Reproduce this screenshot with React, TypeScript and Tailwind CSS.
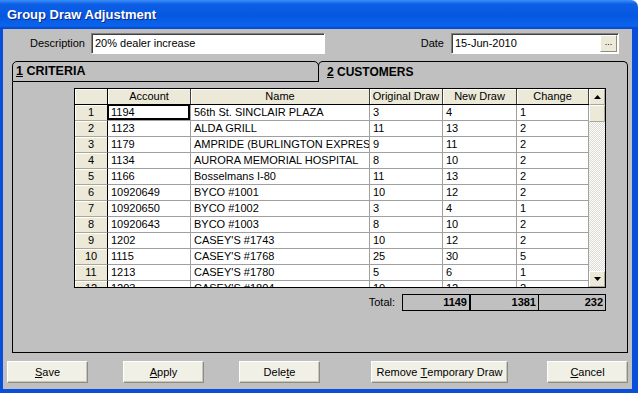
import React from 'react';

const rows: string[][] = [
  ['1', '1194', '56th St. SINCLAIR PLAZA', '3', '4', '1'],
  ['2', '1123', 'ALDA GRILL', '11', '13', '2'],
  ['3', '1179', 'AMPRIDE (BURLINGTON EXPRESS)', '9', '11', '2'],
  ['4', '1134', 'AURORA MEMORIAL HOSPITAL', '8', '10', '2'],
  ['5', '1166', 'Bosselmans I-80', '11', '13', '2'],
  ['6', '10920649', 'BYCO #1001', '10', '12', '2'],
  ['7', '10920650', 'BYCO #1002', '3', '4', '1'],
  ['8', '10920643', 'BYCO #1003', '8', '10', '2'],
  ['9', '1202', "CASEY'S #1743", '10', '12', '2'],
  ['10', '1115', "CASEY'S #1768", '25', '30', '5'],
  ['11', '1213', "CASEY'S #1780", '5', '6', '1'],
  ['12', '1203', "CASEY'S #1804", '10', '12', '2'],
];

const headers = ['Account', 'Name', 'Original Draw', 'New Draw', 'Change'];
const colWidths = ['w-[83px]', 'w-[179px]', 'w-[73px]', 'w-[74px]', 'w-[72px]'];

function Arrow({ down }: { down?: boolean }) {
  return (
    <svg width="7" height="4" viewBox="0 0 7 4">
      <path d={down ? 'M0 0 L7 0 L3.5 4 Z' : 'M3.5 0 L7 4 L0 4 Z'} fill="#000" />
    </svg>
  );
}

function ScrollBtn({ down }: { down?: boolean }) {
  return (
    <div className="h-[16px] shrink-0 flex items-center justify-center bg-[#ece9d8] border border-t-white border-l-white border-r-[#aca899] border-b-[#aca899]">
      <Arrow down={down} />
    </div>
  );
}

function Button({ children, w = 'w-[81px]', className = '' }: { children: React.ReactNode; w?: string; className?: string }) {
  return (
    <div
      className={`${w} ${className} h-[22px] shrink-0 flex items-center justify-center bg-[#f1f0e6] border border-t-white border-l-white border-r-[#8e8c80] border-b-[#8e8c80] shadow-[inset_-1px_-1px_0_#c9c7ba] text-[11px] text-black`}
    >
      {children}
    </div>
  );
}

function Grid() {
  return (
    <div className="w-[532px] h-[200px] border border-black flex bg-white overflow-hidden">
      <div className="w-[514px] shrink-0 flex flex-col overflow-hidden">
        {/* header */}
        <div className="h-[16px] shrink-0 flex border-b border-black">
          <div className="w-[33px] shrink-0 border-r border-black bg-[#ece9d8] shadow-[inset_1px_1px_0_#fff]" />
          {headers.map((h, i) => (
            <div
              key={h}
              className={`${colWidths[i]} shrink-0 border-r border-[#404040] bg-[#ece9d8] shadow-[inset_1px_1px_0_#fff] flex items-center justify-center text-[11px] leading-none`}
            >
              {h}
            </div>
          ))}
        </div>
        {rows.map((r, ri) => (
          <div key={r[0]} className="h-[16px] shrink-0 flex">
            <div className="w-[33px] shrink-0 border-r border-black border-b border-b-[#aca899] bg-[#ece9d8] shadow-[inset_1px_1px_0_#fff] flex items-center justify-center text-[11px] leading-none">
              {r[0]}
            </div>
            {r.slice(1).map((c, ci) => (
              <div
                key={ci}
                className={`${colWidths[ci]} shrink-0 border-r border-b border-[#a0a0a0] pl-[3px] flex items-center overflow-hidden whitespace-nowrap text-[11px] leading-none ${
                  ri === 0 && ci === 0 ? 'shadow-[inset_-2px_-2px_0_#000,inset_1px_1px_0_#000]' : ''
                }`}
              >
                {c}
              </div>
            ))}
          </div>
        ))}
      </div>
      {/* scrollbar */}
      <div className="w-[16px] shrink-0 flex flex-col">
        <ScrollBtn />
        <div className="h-[17px] shrink-0 bg-[#ece9d8] border border-t-white border-l-white border-r-[#aca899] border-b-[#aca899]" />
        <div className="flex-1 bg-[repeating-conic-gradient(#ffffff_0_25%,#dcdad0_0_50%)] bg-[length:2px_2px]" />
        <ScrollBtn down />
      </div>
    </div>
  );
}

export default function App() {
  return (
    <div className="w-[638px] h-[393px] flex flex-col bg-white font-['Liberation_Sans',Arial,sans-serif] text-black select-none">
      {/* title bar */}
      <div className="h-[29px] shrink-0 flex items-center pl-[7px] rounded-tr-[7px] bg-[linear-gradient(180deg,#3d8ff8_0%,#0d5fe6_14%,#0657e0_55%,#0b64ec_88%,#0346cc_100%)]">
        <span className="text-white font-bold text-[13px] [text-shadow:1px_1px_0_#0a2a8a]">Group Draw Adjustment</span>
      </div>

      {/* client */}
      <div className="flex-1 flex flex-col bg-[#c0c0c0] border-l-[3px] border-r-[6px] border-b-[4px] border-[#0a4fdc]">
        {/* description / date */}
        <div className="mt-[4px] h-[21px] shrink-0 flex items-center text-[11px]">
          <div className="w-[82px] text-right">Description</div>
          <div className="ml-[6px] w-[234px] h-[21px] bg-white border border-t-[#808080] border-l-[#808080] border-r-white border-b-white shadow-[inset_1px_1px_0_#404040] pl-[3px] flex items-center">
            20% dealer increase
          </div>
          <div className="ml-auto mr-[13px] flex items-center">
            <div>Date</div>
            <div className="ml-[7px] w-[168px] h-[21px] bg-white border border-t-[#808080] border-l-[#808080] border-r-white border-b-white shadow-[inset_1px_1px_0_#404040] pl-[3px] pr-[1px] flex items-center">
              <span className="flex-1">15-Jun-2010</span>
              <div className="w-[17px] h-[17px] bg-[#ece9d8] border border-t-white border-l-white border-r-[#8e8c80] border-b-[#8e8c80] flex items-center justify-center text-[9px] leading-none pb-[2px]">
                ...
              </div>
            </div>
          </div>
        </div>

        {/* tabs */}
        <div className="mt-[7px] ml-[9px] h-[21px] shrink-0 flex">
          <div className="w-[307px] h-[21px] border border-black rounded-t-[5px] flex items-center pl-[3px] text-[12.5px] font-bold">
            <span className="underline">1</span>&nbsp;CRITERIA
          </div>
          <div className="-ml-px w-[310px] h-[21px] border border-b-0 border-black rounded-t-[5px] flex items-center pl-[8px] text-[12px] font-bold">
            <span className="underline">2</span>&nbsp;CUSTOMERS
          </div>
        </div>

        {/* panel */}
        <div className="ml-[9px] w-[616px] h-[271px] shrink-0 border-x border-b border-black pl-[61px] pt-[6px]">
          <Grid />
          <div className="w-[532px] mt-[6px] flex items-center justify-end text-[11px]">
            <span className="mr-[7px]">Total:</span>
            <div className="flex h-[17px] border border-black font-bold">
              <div className="w-[68px] border-r-2 border-black flex items-center justify-end pr-[2px]">1149</div>
              <div className="w-[68px] border-r border-black flex items-center justify-end pr-[2px]">1381</div>
              <div className="w-[66px] flex items-center justify-end pr-[2px]">232</div>
            </div>
          </div>
        </div>

        {/* buttons */}
        <div className="mt-[8px] pl-[4px] flex">
          <Button>
            <span className="underline">S</span>ave
          </Button>
          <Button className="ml-[35px]">
            <span className="underline">A</span>pply
          </Button>
          <Button className="ml-[35px]">
            Dele<span className="underline">t</span>e
          </Button>
          <Button w="w-[137px]" className="ml-[51px]">
            Remove&nbsp;<span className="underline">T</span>emporary Draw
          </Button>
          <Button className="ml-[39px]">
            <span className="underline">C</span>ancel
          </Button>
        </div>
      </div>
    </div>
  );
}
